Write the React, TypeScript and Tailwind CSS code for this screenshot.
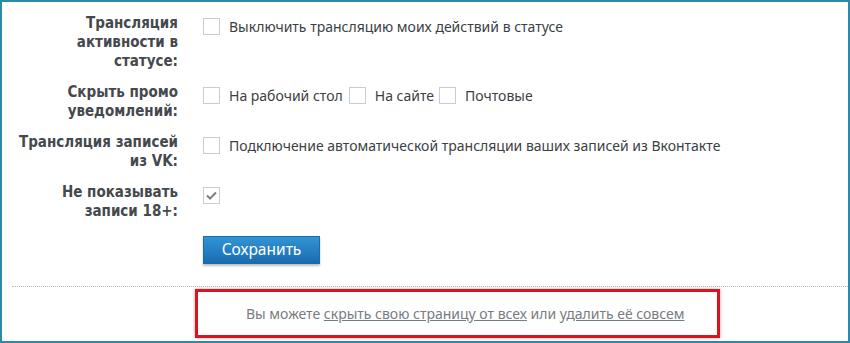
import React from "react";

const labelFont = { fontFamily: '"DejaVu Sans Condensed", "DejaVu Sans", sans-serif', fontStretch: "condensed" as const };

function Box({ checked = false }: { checked?: boolean }) {
  return (
    <span className="flex h-[17px] w-[17px] shrink-0 items-center justify-center border border-[#c9ccd1] bg-white">
      {checked && (
        <svg width="11" height="9" viewBox="0 0 11 9" fill="none">
          <path d="M1 4.5 L4 7.5 L10 1.5" stroke="#7b8087" strokeWidth="2" />
        </svg>
      )}
    </span>
  );
}

function Label({ children }: { children: React.ReactNode }) {
  return (
    <div className="text-right text-[15px] font-bold leading-[19px] text-[#45494e]" style={labelFont}>
      {children}
    </div>
  );
}

export default function App() {
  return (
    <div
      className="flex h-[343px] w-[850px] flex-col border-2 border-[#2b8aa8] bg-white"
      style={{ fontFamily: '"Noto Sans", "Open Sans", sans-serif' }}
    >
      <div className="grid grid-cols-[176px_1fr] gap-x-[25px] gap-y-[12px] pt-[12px]">
        <Label>
          Трансляция
          <br />
          активности в
          <br />
          статусе:
        </Label>
        <div className="flex items-center gap-[9px] pt-[4px] self-start text-[14px] leading-[17px] text-[#3b3f44]">
          <Box />
          <span>Выключить трансляцию моих действий в статусе</span>
        </div>

        <Label>
          Скрыть промо
          <br />
          уведомлений:
        </Label>
        <div className="flex items-center pt-[4px] self-start text-[14px] leading-[17px] text-[#3b3f44]">
          <Box />
          <span className="ml-[9px]">На рабочий стол</span>
          <span className="ml-[6px]"><Box /></span>
          <span className="ml-[9px]">На сайте</span>
          <span className="ml-[5px]"><Box /></span>
          <span className="ml-[9px]">Почтовые</span>
        </div>

        <Label>
          Трансляция записей
          <br />
          из VK:
        </Label>
        <div className="flex items-center gap-[9px] pt-[4px] self-start text-[14px] leading-[17px] text-[#3b3f44]">
          <Box />
          <span>Подключение автоматической трансляции ваших записей из Вконтакте</span>
        </div>

        <Label>
          Не показывать
          <br />
          записи 18+:
        </Label>
        <div className="flex items-center pt-[4px] self-start">
          <Box checked />
        </div>

        <div />
        <div className="pt-[3px]">
          <button className="h-[28px] w-[117px] border border-[#1c6aa6] bg-gradient-to-b from-[#3195d6] to-[#1a6cb0] text-[15.5px] text-white shadow-[0_2px_2px_rgba(0,0,0,0.25)]">
            Сохранить
          </button>
        </div>
      </div>

      <div className="ml-[10px] mt-[22px] border-t border-dotted border-[#b5b8bb]" />

      <div className="ml-[193px] mt-[2px] flex h-[49px] w-[525px] items-center border-[3px] border-[#d7141f] pl-[48px] text-[14px] text-[#777c82] shadow-[0_0_3px_rgba(200,0,0,0.4)]">
        <span>
          Вы можете <span className="underline">скрыть свою страницу от всех</span> или{" "}
          <span className="underline">удалить её совсем</span>
        </span>
      </div>
    </div>
  );
}
